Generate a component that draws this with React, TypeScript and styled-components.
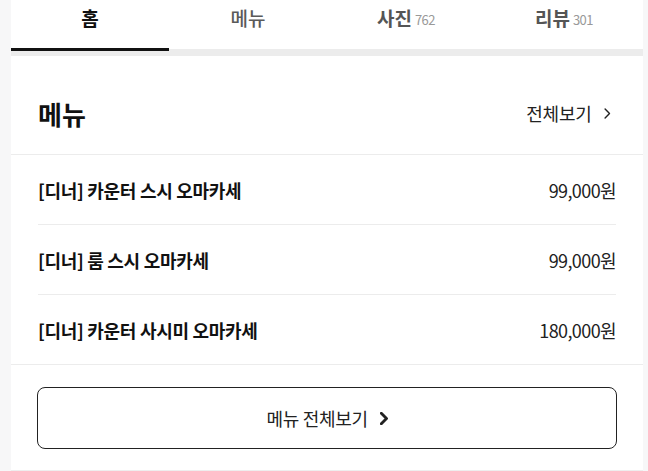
import React from "react";
import styled, { createGlobalStyle } from "styled-components";

const Global = createGlobalStyle`
  html, body { margin: 0; padding: 0; background: #f7f7f8; }
  body { font-family: "Noto Sans CJK KR", "Noto Sans", sans-serif; color: #111; }
`;

const Page = styled.div`
  padding-left: 11px;
  width: 632px;
`;

const Card = styled.div`
  background: #fff;
  padding-bottom: 21px;
  border-bottom: 2px solid #eeeeee;
`;

const Tabs = styled.nav`
  display: grid;
  grid-template-columns: repeat(4, 1fr);
  border-bottom: 7px solid #ececec;
  position: relative;
`;

const Tab = styled.div<{ $active?: boolean; $bold?: boolean }>`
  height: 49px;
  display: flex;
  align-items: flex-start;
  justify-content: center;
  padding-top: 4px;
  box-sizing: border-box;
  font-size: 19px;
  line-height: 28px;
  font-weight: ${(p) => (p.$active || p.$bold ? 700 : 500)};
  color: ${(p) => (p.$active ? "#111" : p.$bold ? "#555" : "#5a5a5a")};
  position: relative;
  &::after {
    content: "";
    display: ${(p) => (p.$active ? "block" : "none")};
    position: absolute;
    left: 0;
    right: 0;
    bottom: -2px;
    height: 3px;
    background: #111;
  }
`;

const Count = styled.span`
  font-size: 13px;
  font-weight: 400;
  color: #999;
  margin-left: 3px;
  padding-top: 2px;
  letter-spacing: -0.5px;
`;

const SectionHead = styled.div`
  display: flex;
  align-items: center;
  justify-content: space-between;
  height: 99px;
  padding: 16px 32px 0 27px;
  box-sizing: border-box;
  border-bottom: 1px solid #ececec;
`;

const Title = styled.h2`
  margin: 0;
  font-size: 26px;
  font-weight: 700;
  color: #111;
`;

const More = styled.div`
  display: flex;
  align-items: center;
  gap: 13px;
  font-size: 18px;
  color: #222;
  letter-spacing: -0.3px;
`;

const List = styled.ul`
  list-style: none;
  margin: 0;
  padding: 0 27px;
  border-bottom: 1px solid #ececec;
`;

const Row = styled.li`
  display: flex;
  justify-content: space-between;
  align-items: center;
  height: 69px;
  & + & {
    border-top: 1px solid #ececec;
  }
`;

const Name = styled.span`
  font-size: 18px;
  font-weight: 700;
  color: #111;
  letter-spacing: -0.3px;
`;

const Price = styled.span`
  font-size: 18px;
  color: #222;
  letter-spacing: -0.6px;
`;

const Button = styled.button`
  display: flex;
  align-items: center;
  justify-content: center;
  gap: 12px;
  margin: 22px 26px 0 26px;
  width: calc(100% - 52px);
  height: 62px;
  box-sizing: border-box;
  border: 1.5px solid #222;
  border-radius: 8px;
  background: #fff;
  font-family: inherit;
  font-size: 18px;
  color: #222;
  letter-spacing: -0.3px;
  cursor: pointer;
`;

const Chevron = ({ w = 2, size = 12 }: { w?: number; size?: number }) => (
  <svg width={size * 0.6} height={size} viewBox="0 0 6 10" fill="none">
    <path d="M1 1l4 4-4 4" stroke="#222" strokeWidth={w} strokeLinecap="round" strokeLinejoin="round" />
  </svg>
);

const items = [
  { name: "[디너] 카운터 스시 오마카세", price: "99,000원" },
  { name: "[디너] 룸 스시 오마카세", price: "99,000원" },
  { name: "[디너] 카운터 사시미 오마카세", price: "180,000원" },
];

export default function App() {
  return (
    <Page>
      <Global />
      <Card>
        <Tabs>
          <Tab $active>홈</Tab>
          <Tab>메뉴</Tab>
          <Tab $bold>
            사진<Count>762</Count>
          </Tab>
          <Tab $bold>
            리뷰<Count>301</Count>
          </Tab>
        </Tabs>
        <SectionHead>
          <Title>메뉴</Title>
          <More>
            전체보기 <Chevron w={1.3} size={11} />
          </More>
        </SectionHead>
        <List>
          {items.map((it) => (
            <Row key={it.name}>
              <Name>{it.name}</Name>
              <Price>{it.price}</Price>
            </Row>
          ))}
        </List>
        <Button>
          메뉴 전체보기 <Chevron w={2.2} size={13} />
        </Button>
      </Card>
    </Page>
  );
}
